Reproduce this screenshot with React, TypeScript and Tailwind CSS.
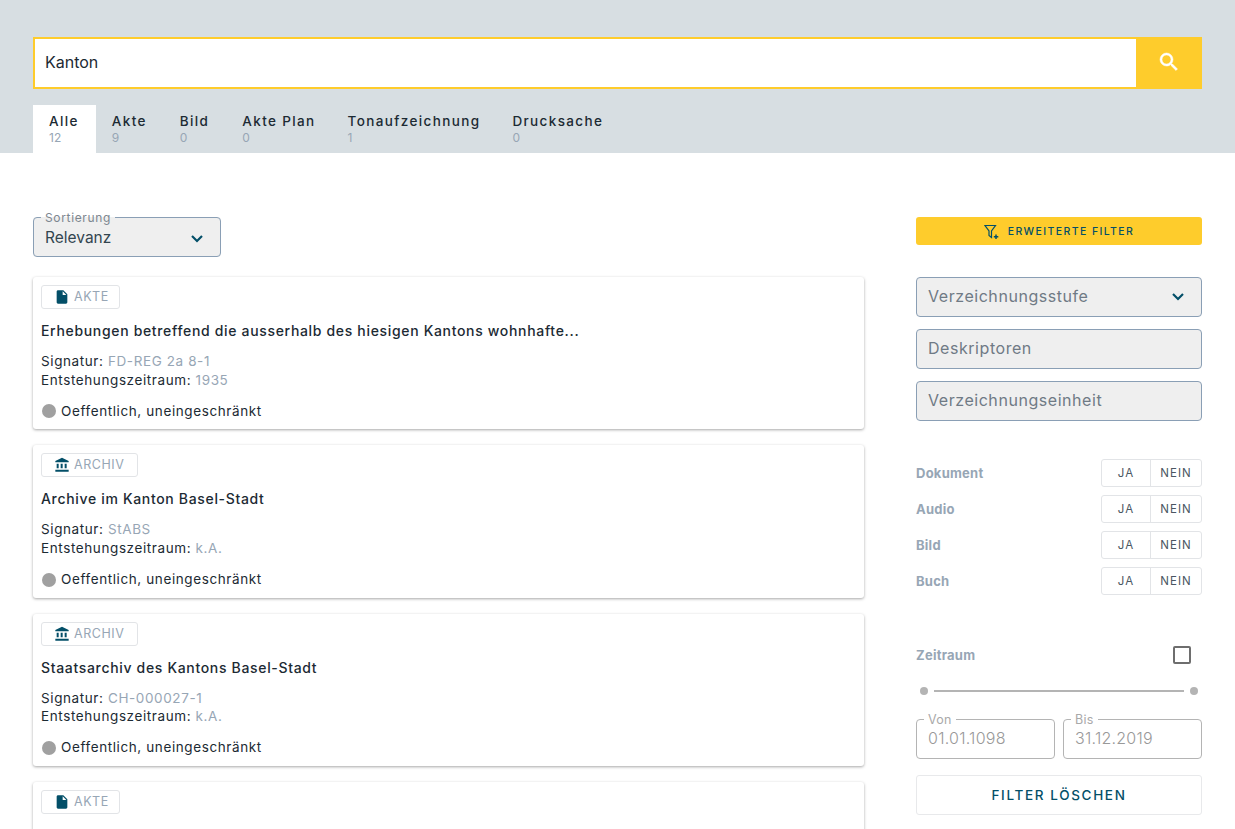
import React from "react";

const font = "font-['Inter','Noto_Sans',sans-serif]";

function Chevron() {
  return (
    <svg viewBox="0 0 24 24" className="h-[20px] w-[20px] fill-none stroke-[#034f68] stroke-[2.6]">
      <path d="M6 9.5 12 15.500l6-6" />
    </svg>
  );
}

function FileIcon() {
  return (
    <svg viewBox="0 0 24 24" className="h-[16px] w-[16px] fill-[#034f68]">
      <path d="M6 2c-1.1 0-2 .9-2 2v16c0 1.1.9 2 2 2h12c1.1 0 2-.9 2-2V8l-6-6H6zm7 7V3.5L18.5 9H13z" />
    </svg>
  );
}

function BankIcon() {
  return (
    <svg viewBox="0 0 24 24" className="h-[16px] w-[16px] fill-[#034f68]">
      <path d="M4 10v7h3v-7H4zm6 0v7h3v-7h-3zM2 22h20v-3H2v3zm14-12v7h3v-7h-3zM12 1 2 6v2h20V6L12 1z" />
    </svg>
  );
}

const tabs = [
  ["Alle", "12"],
  ["Akte", "9"],
  ["Bild", "0"],
  ["Akte Plan", "0"],
  ["Tonaufzeichnung", "1"],
  ["Drucksache", "0"],
];

type CardData = { type: string; title?: string; sig?: string; time?: string };

const cards: CardData[] = [
  { type: "AKTE", title: "Erhebungen betreffend die ausserhalb des hiesigen Kantons wohnhafte...", sig: "FD-REG 2a 8-1", time: "1935" },
  { type: "ARCHIV", title: "Archive im Kanton Basel-Stadt", sig: "StABS", time: "k.A." },
  { type: "ARCHIV", title: "Staatsarchiv des Kantons Basel-Stadt", sig: "CH-000027-1", time: "k.A." },
  { type: "AKTE" },
];

function Card({ c }: { c: CardData }) {
  return (
    <article className="flex h-[152.3px] shrink-0 flex-col items-start rounded-[3px] bg-white px-2 pt-2 shadow-[0_1px_3px_rgba(0,0,0,0.35)]">
      <div className={`flex h-6 items-center gap-[4px] rounded-[3px] border border-[#e2e4e7] pl-[12px] ${c.type === "AKTE" ? "w-[79px]" : "w-[97px]"}`}>
        {c.type === "AKTE" ? <FileIcon /> : <BankIcon />}
        <span className="pt-px text-[12.5px] tracking-[0.55px] text-[#97a6b5]">{c.type}</span>
      </div>
      {c.title && (
        <>
          <h2 className="mt-[12px] text-[14px] font-[450] leading-[20px] tracking-[0.67px] text-[#1c2a33]">{c.title}</h2>
          <p className="mt-[11px] text-[13.5px] leading-[18.8px] tracking-[0.6px] text-[#1c2a33]">
            Signatur: <span className="text-[#97a6b5]">{c.sig}</span>
          </p>
          <p className="text-[13.5px] leading-[18.8px] tracking-[0.6px] text-[#1c2a33]">
            Entstehungszeitraum: <span className="text-[#97a6b5]">{c.time}</span>
          </p>
          <div className="mt-[12.2px] flex items-center gap-[5px]">
            <span className="ml-px h-[14px] w-[14px] rounded-full bg-[#a0a0a0]" />
            <span className="text-[13.5px] leading-[19px] tracking-[0.6px] text-[#1c2a33]">Oeffentlich, uneingeschränkt</span>
          </div>
        </>
      )}
    </article>
  );
}

function BoxField({ label, chevron }: { label: string; chevron?: boolean }) {
  return (
    <div className="flex h-10 items-center justify-between rounded-[4px] border border-[#8a9fb5] bg-[#efefef] pb-[2px] pl-[11px] pr-[13px]">
      <span className="text-[16px] tracking-[0.55px] text-[#6f7a85]">{label}</span>
      {chevron && <Chevron />}
    </div>
  );
}

function ToggleRow({ label }: { label: string }) {
  return (
    <div className="flex h-7 items-center justify-between">
      <span className="pt-px text-[13px] font-bold tracking-[0.25px] text-[#97a6b5]">{label}</span>
      <div className="flex h-7 w-[101px] rounded-[3px] border border-[#e2e4e7] pt-px text-[11.5px] tracking-[1px] text-[#4a5662]">
        <span className="-mt-px flex w-[49px] items-center justify-center border-r border-[#e2e4e7] pt-px">JA</span>
        <span className="flex flex-1 items-center justify-center">NEIN</span>
      </div>
    </div>
  );
}

function DateField({ label, value }: { label: string; value: string }) {
  return (
    <fieldset className="-mt-[6px] h-[46px] min-w-0 flex-1 rounded-[4px] border border-[#b4b4b4] pl-[7px]">
      <legend className="px-[4px] pt-px text-[12.5px] leading-[12px] tracking-[0.3px] text-[#a9a9a9]">{label}</legend>
      <div className="pl-[4px] pt-[2px] text-[16px] font-light leading-[20px] tracking-[0.25px] text-[#999999]">{value}</div>
    </fieldset>
  );
}

export default function App() {
  return (
    <div className={`${font} h-[829px] overflow-hidden bg-white`}>
      <header className="h-[153px] bg-[#d7dee2] px-[33px] pt-[37px]">
        <div className="flex h-[52px] w-[1169px] border-2 border-[#fecc2c] bg-white">
          <div className="flex flex-1 items-center pb-[2px] pl-[10px] text-[16px] text-[#1c2a33]">Kanton</div>
          <div className="-m-[2px] flex h-[52px] w-[66px] items-center justify-center bg-[#fecc2c] pb-[2px]">
            <svg viewBox="0 0 24 24" className="h-[24px] w-[24px] fill-white stroke-white stroke-[0.5]">
              <path d="M15.5 14h-.79l-.28-.27A6.47 6.47 0 0 0 16 9.5 6.5 6.500 0 1 0 9.5 16c1.61 0 3.09-.59 4.23-1.57l.27.28v.79l5 4.99L20.49 19l-4.99-5zm-6 0C7.01 14 5 11.99 5 9.5S7.01 5 9.5 5 14 7.01 14 9.5 11.99 14 9.5 14z" />
            </svg>
          </div>
        </div>
        <nav className="mt-4 flex h-12">
          {tabs.map(([name, count], i) => (
            <div key={name} className={`h-12 pl-4 pt-[8px] ${i < 3 ? "pr-[17px]" : "pr-4"} ${i === 0 ? "bg-white" : ""}`}>
              <div className="text-[13.5px] font-medium leading-[17px] tracking-[1.37px] text-[#1c2a33]">{name}</div>
              <div className="text-[12px] leading-[15px] text-[#97a6b5]">{count}</div>
            </div>
          ))}
        </nav>
      </header>

      <main className="flex gap-[52px] px-[33px] pt-[64px]">
        <section className="flex w-[831px] flex-col">
          <div className="mb-5 h-10 w-[188px]">
            <fieldset className="-mt-[6px] flex h-[46px] items-start justify-between rounded-[4px] border border-[#8a9fb5] bg-[#efefef] pl-[7px] pr-[13px]">
              <legend className="px-[4px] pt-px text-[12px] leading-[12px] tracking-[0.65px] text-[#7d8790]">Sortierung</legend>
              <span className="pl-[4px] pt-[4px] text-[15.5px] leading-[20px] text-[#33454f]">Relevanz</span>
              <span className="pt-[4px]"><Chevron /></span>
            </fieldset>
          </div>
          <div className="flex flex-col gap-4">
            {cards.map((c, i) => (
              <Card key={i} c={c} />
            ))}
          </div>
        </section>

        <aside className="flex w-[286px] flex-col">
          <button className="flex h-7 items-center justify-center gap-[8px] rounded-[3px] bg-[#fecc2c] pt-px text-[10.5px] font-medium tracking-[1.4px] text-[#034f68]">
            <svg viewBox="0 0 16 16" className="h-[16px] w-[16px] fill-none stroke-[#034f68] stroke-[1.2]">
              <path d="M1 1.500h10.500L7.500 7v6.500L5 11.500V7z" />
              <path d="M12 10.500v4.500M9.800 12.800h4.500" strokeWidth="1.500" />
            </svg>
            ERWEITERTE FILTER
          </button>
          <div className="mt-8 flex flex-col gap-3">
            <BoxField label="Verzeichnungsstufe" chevron />
            <BoxField label="Deskriptoren" />
            <BoxField label="Verzeichnungseinheit" />
          </div>
          <div className="mt-[38px] flex flex-col gap-2">
            <ToggleRow label="Dokument" />
            <ToggleRow label="Audio" />
            <ToggleRow label="Bild" />
            <ToggleRow label="Buch" />
          </div>
          <div className="mt-[51px] flex h-[18px] items-center justify-between pr-[11px]">
            <span className="pt-px text-[13px] font-bold tracking-[0.25px] text-[#97a6b5]">Zeitraum</span>
            <span className="h-[18px] w-[18px] rounded-[2px] border-2 border-[#6e6e6e]" />
          </div>
          <div className="mt-[23px] flex h-2 items-center gap-[6px] px-[4px]">
            <span className="h-2 w-2 shrink-0 rounded-full bg-[#b4b4b4]" />
            <span className="h-[2px] flex-1 bg-[#b4b4b4]" />
            <span className="h-2 w-2 shrink-0 rounded-full bg-[#b4b4b4]" />
          </div>
          <div className="mt-6 flex h-10 gap-2">
            <DateField label="Von" value="01.01.1098" />
            <DateField label="Bis" value="31.12.2019" />
          </div>
          <button className="mt-4 h-10 rounded-[3px] border border-[#e8e9eb] text-[13.5px] font-medium tracking-[1.65px] text-[#034f68]">
            FILTER LÖSCHEN
          </button>
        </aside>
      </main>
    </div>
  );
}
